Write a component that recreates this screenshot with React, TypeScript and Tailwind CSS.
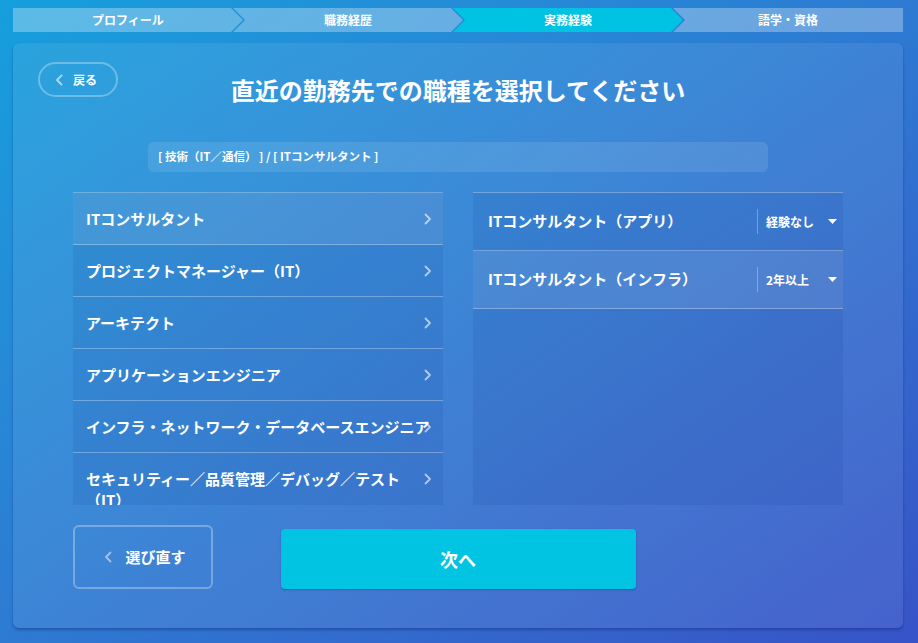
import React from 'react';

const steps = [
    { label: 'プロフィール', active: false },
    { label: '職務経歴', active: false },
    { label: '実務経験', active: true },
    { label: '語学・資格', active: false },
];

const jobs = [
    'ITコンサルタント',
    'プロジェクトマネージャー（IT）',
    'アーキテクト',
    'アプリケーションエンジニア',
    'インフラ・ネットワーク・データベースエンジニア',
    'セキュリティー／品質管理／デバッグ／テスト（IT）',
];

const details = [
    { label: 'ITコンサルタント（アプリ）', value: '経験なし', selected: false },
    { label: 'ITコンサルタント（インフラ）', value: '2年以上', selected: true },
];

function ChevronRight({ className }: { className?: string }) {
    return (
        <svg className={className} width="8" height="12" viewBox="0 0 8 12" fill="none">
            <path d="M1.5 1.5L6 6l-4.5 4.5" stroke="currentColor" strokeWidth="1.8" strokeLinecap="round" strokeLinejoin="round" />
        </svg>
    );
}

function ChevronLeft({ className }: { className?: string }) {
    return (
        <svg className={className} width="8" height="12" viewBox="0 0 8 12" fill="none">
            <path d="M6.5 1.5L2 6l4.5 4.5" stroke="currentColor" strokeWidth="1.8" strokeLinecap="round" strokeLinejoin="round" />
        </svg>
    );
}

function Caret() {
    return (
        <svg width="9" height="5" viewBox="0 0 9 5">
            <path d="M0 0h9L4.5 5z" fill="white" />
        </svg>
    );
}

function StepBar() {
    return (
        <div className="flex h-6 w-[890px] ml-[13px]">
            {steps.map((s, i) => {
                const shape =
                    i === 0
                        ? '[clip-path:polygon(0_0,calc(100%_-_12px)_0,100%_50%,calc(100%_-_12px)_100%,0_100%)]'
                        : i === steps.length - 1
                            ? '-ml-[10px] [clip-path:polygon(0_0,100%_0,100%_100%,0_100%,12px_50%)]'
                            : '-ml-[10px] [clip-path:polygon(0_0,calc(100%_-_12px)_0,100%_50%,calc(100%_-_12px)_100%,0_100%,12px_50%)]';
                return (
                    <div
                        key={s.label}
                        className={`flex-1 flex items-center justify-center text-[12px] font-bold text-white ${shape} ${s.active ? 'bg-[#00c3e3]' : 'bg-white/30'}`}
                    >
                        {s.label}
                    </div>
                );
            })}
        </div>
    );
}

export default function App() {
    return (
        <div className="w-[918px] h-[643px] overflow-hidden bg-linear-to-br from-[#149fdc] to-[#3753c7] pt-2 font-['Noto_Sans_CJK_JP',sans-serif] text-white">
            <StepBar />

            {/* Card */}
            <div className="w-[890px] h-[585px] ml-[13px] mt-[11px] rounded-md bg-white/[0.08] shadow-[0_2px_3px_rgba(10,30,110,0.35)] pt-[19px]">
                {/* Header */}
                <div className="grid grid-cols-[1fr_auto_1fr] items-start">
                    <button className="justify-self-start ml-[25px] w-[80px] h-[35px] rounded-full border-2 border-white/30 flex items-center pl-[15px] gap-[10px] text-[12px] font-bold">
                        <ChevronLeft className="text-white/60" />
                        戻る
                    </button>
                    <h1 className="mt-[12px] text-[24px] leading-[32px] font-bold">直近の勤務先での職種を選択してください</h1>
                    <div />
                </div>

                {/* Breadcrumb */}
                <div className="mx-auto mt-[36px] w-[620px] h-[30px] rounded-md bg-white/10 flex items-center pl-[10px] text-[11.5px] font-bold whitespace-pre">
                    {'[ 技術（IT／通信） ] / [ ITコンサルタント ]'}
                </div>

                {/* Lists */}
                <div className="mt-[20px] mx-[60px] grid grid-cols-2 gap-[30px]">
                    <div className="h-[313px] overflow-hidden border-t border-white/30 bg-[#0a3590]/10">
                        {jobs.map((j, i) => (
                            <div
                                key={j}
                                className={`relative border-b border-white/30 py-[15px] pl-[13px] pr-[12px] text-[15px] leading-[21px] font-bold ${i === 0 ? 'bg-white/10' : ''}`}
                            >
                                {j}
                                <ChevronRight className="absolute right-[11px] top-[20px] text-white/60" />
                            </div>
                        ))}
                    </div>

                    <div className="h-[313px] border-t border-white/30 bg-[#0a3590]/10">
                        {details.map((d) => (
                            <div
                                key={d.label}
                                className={`h-[58px] border-b border-white/30 flex items-center pl-[15px] ${d.selected ? 'bg-white/10' : ''}`}
                            >
                                <span className="flex-1 text-[15px] font-bold">{d.label}</span>
                                <div className="w-[86px] h-[25px] border-l border-white/30 flex items-center justify-between pl-[8px] pr-[6px] text-[12px] font-bold">
                                    {d.value}
                                    <Caret />
                                </div>
                            </div>
                        ))}
                    </div>
                </div>

                {/* Buttons */}
                <div className="mt-[20px] mx-[60px] grid grid-cols-[140px_1fr_140px] items-end">
                    <button className="h-[64px] rounded-md border-2 border-white/30 flex items-center justify-center gap-[13px] pl-[4px] text-[15px] font-bold">
                        <ChevronLeft className="text-white/50" />
                        選び直す
                    </button>
                    <button className="justify-self-center w-[355px] h-[60px] rounded-sm bg-[#00c4e1] shadow-[0_1px_2px_rgba(0,40,120,0.35)] text-[18px] font-bold">
                        次へ
                    </button>
                    <div />
                </div>
            </div>
        </div>
    );
}
